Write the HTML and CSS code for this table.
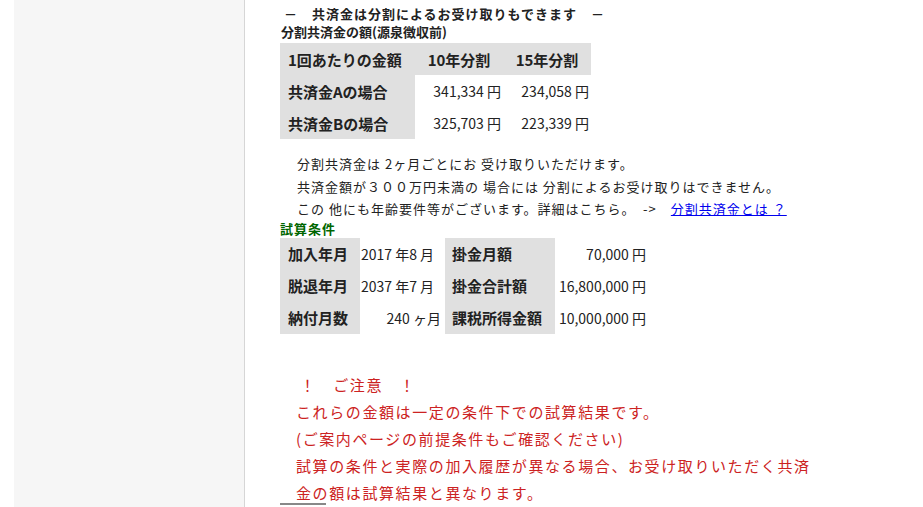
FILE: index.html
```html
<!DOCTYPE html>
<html lang="ja">
<head>
<meta charset="utf-8">
<title>分割共済金</title>
<link rel="stylesheet" href="styles.css">
</head>
<body>
<div class="page">
  <aside class="sidebar"></aside>
  <main class="main">
    <p class="lead">－　共済金は分割によるお受け取りもできます　－</p>
    <p class="subhead">分割共済金の額(源泉徴収前)</p>
    <table class="split">
      <tr>
        <th class="label">1回あたりの金額</th>
        <th class="col">10年分割</th>
        <th class="col">15年分割</th>
      </tr>
      <tr>
        <th class="label">共済金Aの場合</th>
        <td>341,334 円</td>
        <td>234,058 円</td>
      </tr>
      <tr>
        <th class="label">共済金Bの場合</th>
        <td>325,703 円</td>
        <td>223,339 円</td>
      </tr>
    </table>
    <div class="notes">
      <p>分割共済金は 2ヶ月ごとにお 受け取りいただけます。</p>
      <p>共済金額が３００万円未満の 場合には 分割によるお受け取りはできません。</p>
      <p>この 他にも年齢要件等がございます。詳細はこちら。　-&gt;　<a href="#">分割共済金とは ？</a></p>
    </div>
    <p class="cond-title">試算条件</p>
    <table class="cond">
      <tr>
        <th class="k1">加入年月</th><td class="v1 left">2017 年8 月</td>
        <th class="k2">掛金月額</th><td class="v2">70,000 円</td>
      </tr>
      <tr>
        <th class="k1">脱退年月</th><td class="v1 left">2037 年7 月</td>
        <th class="k2">掛金合計額</th><td class="v2">16,800,000 円</td>
      </tr>
      <tr>
        <th class="k1">納付月数</th><td class="v1">240 ヶ月</td>
        <th class="k2">課税所得金額</th><td class="v2">10,000,000 円</td>
      </tr>
    </table>
    <div class="caution">
      <p class="caution-title">！　ご注意　！</p>
      <p>これらの金額は一定の条件下での試算結果です。</p>
      <p>(ご案内ページの前提条件もご確認ください)</p>
      <p>試算の条件と実際の加入履歴が異なる場合、お受け取りいただく共済金の額は試算結果と異なります。</p>
    </div>
    <div class="rule"></div>
  </main>
</div>
</body>
</html>
```
FILE: styles.css
```css
html, body {
  margin: 0;
  padding: 0;
  background: #ffffff;
}
body {
  font-family: "Noto Sans CJK JP", "Liberation Sans", sans-serif;
  color: #222222;
  font-size: 13px;
}
.page {
  display: flex;
  height: 507px;
  overflow: hidden;
}
.sidebar {
  margin-left: 14px;
  width: 230px;
  flex: 0 0 230px;
  background: #f6f6f6;
  border-right: 1px solid #d6d6d6;
}
.main {
  padding-left: 35px;
  padding-top: 5px;
  flex: 1;
}
p {
  margin: 0;
}
.lead {
  font-weight: bold;
  font-size: 13px;
  line-height: 18px;
  margin-left: 4px;
  letter-spacing: 1px;
}
.subhead {
  font-weight: bold;
  font-size: 13px;
  line-height: 18px;
  margin-left: 1px;
}
table {
  border-collapse: collapse;
}
.split {
  margin-top: 2px;
}
.split th, .split td {
  height: 32px;
  padding: 0;
  font-size: 15px;
  white-space: nowrap;
}
.split th {
  background: #e0e0e0;
  font-weight: bold;
}
.split th.label {
  width: 127px;
  text-align: left;
  padding-left: 8px;
}
.split th.col {
  width: 88px;
  text-align: center;
}
.split td {
  text-align: right;
  padding-right: 2px;
  font-size: 14px;
  font-weight: normal;
}
.notes {
  margin-top: 14px;
  padding-left: 17px;
  font-size: 13px;
  line-height: 22.5px;
  letter-spacing: 1px;
}
.notes a {
  color: #0000ee;
  text-decoration: underline;
}
.cond-title {
  color: #006600;
  font-weight: bold;
  font-size: 13px;
  line-height: 18px;
  margin-top: -1px;
  letter-spacing: 1px;
}
.cond th, .cond td {
  height: 32px;
  padding: 0;
  white-space: nowrap;
  box-sizing: border-box;
}
.cond th {
  background: #e0e0e0;
  font-weight: bold;
  font-size: 15px;
  text-align: left;
  padding-left: 8px;
}
.cond th.k1 {
  width: 80px;
}
.cond th.k2 {
  width: 110px;
  padding-left: 7px;
}
.cond td {
  font-size: 14px;
  text-align: right;
  padding-right: 4px;
}
.cond td.left {
  text-align: left;
  padding-left: 1px;
}
.cond td.v1 {
  width: 85px;
}
.cond td.v2 {
  width: 95px;
}
.caution {
  margin-top: 37px;
  padding-left: 16px;
  width: 525px;
  color: #cc2222;
  font-size: 15px;
  line-height: 27px;
  letter-spacing: 1.6px;
}
.caution-title {
  padding-left: 4px;
}
.rule {
  margin-top: -3px;
  width: 46px;
  height: 2px;
  background: #888888;
}
```
